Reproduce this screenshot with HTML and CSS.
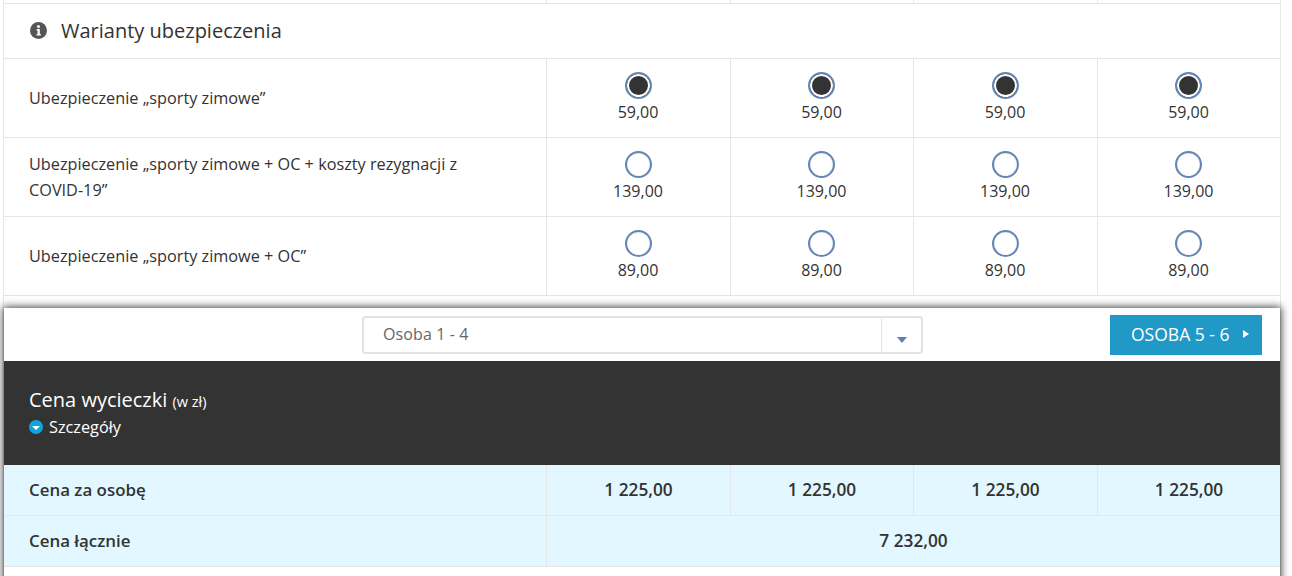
FILE: index.html
```html
<!DOCTYPE html>
<html lang="pl">
<head>
<meta charset="utf-8">
<title>Warianty ubezpieczenia</title>
<link rel="stylesheet" href="styles.css">
</head>
<body>
<div class="page">
  <div class="table">
    <div class="row stub"><div class="cell label"></div><div class="cell"></div><div class="cell"></div><div class="cell"></div><div class="cell last"></div></div>
    <div class="section-title">
      <svg class="info" width="17" height="17" viewBox="0 0 17 17"><circle cx="8.5" cy="8.5" r="8.5" fill="#555"/><circle cx="8.5" cy="4.6" r="1.5" fill="#fff"/><path d="M6.6 7h3.2v5h1v1.4H6.6V12h1V8.4h-1z" fill="#fff"/></svg>
      <span>Warianty ubezpieczenia</span>
    </div>
    <div class="row option">
      <div class="cell label">Ubezpieczenie „sporty zimowe”</div>
      <div class="cell choice"><span class="radio checked"></span><span>59,00</span></div>
      <div class="cell choice"><span class="radio checked"></span><span>59,00</span></div>
      <div class="cell choice"><span class="radio checked"></span><span>59,00</span></div>
      <div class="cell choice last"><span class="radio checked"></span><span>59,00</span></div>
    </div>
    <div class="row option">
      <div class="cell label">Ubezpieczenie „sporty zimowe + OC + koszty rezygnacji z COVID-19”</div>
      <div class="cell choice"><span class="radio"></span><span>139,00</span></div>
      <div class="cell choice"><span class="radio"></span><span>139,00</span></div>
      <div class="cell choice"><span class="radio"></span><span>139,00</span></div>
      <div class="cell choice last"><span class="radio"></span><span>139,00</span></div>
    </div>
    <div class="row option">
      <div class="cell label">Ubezpieczenie „sporty zimowe + OC”</div>
      <div class="cell choice"><span class="radio"></span><span>89,00</span></div>
      <div class="cell choice"><span class="radio"></span><span>89,00</span></div>
      <div class="cell choice"><span class="radio"></span><span>89,00</span></div>
      <div class="cell choice last"><span class="radio"></span><span>89,00</span></div>
    </div>
    <div class="panel">
      <div class="toolbar">
        <div class="select">
          <span class="select-value">Osoba 1 - 4</span>
          <span class="select-arrow"><span class="arrow-down"></span></span>
        </div>
        <div class="next"><span>OSOBA 5 - 6</span><span class="arrow-right"></span></div>
      </div>
      <div class="price-head">
        <div class="price-title">Cena wycieczki <small>(w zł)</small></div>
        <div class="details"><span class="details-icon"><span class="details-caret"></span></span>Szczegóły</div>
      </div>
      <div class="row total">
        <div class="cell label">Cena za osobę</div>
        <div class="cell">1 225,00</div>
        <div class="cell">1 225,00</div>
        <div class="cell">1 225,00</div>
        <div class="cell last">1 225,00</div>
      </div>
      <div class="row total">
        <div class="cell label">Cena łącznie</div>
        <div class="cell span">7 232,00</div>
      </div>
      <div class="panel-end"></div>
    </div>
  </div>
</div>
</body>
</html>
```
FILE: styles.css
```css
* { box-sizing: border-box; }
html, body { margin: 0; padding: 0; background: #fff; }
body { font-family: "Open Sans", "Liberation Sans", sans-serif; color: #333; }
.page { height: 576px; overflow: hidden; padding: 0 11px 0 3px; }
.table { border-left: 1px solid #e6e6e6; border-right: 1px solid #e6e6e6; }
.row { display: grid; grid-template-columns: 543px 184px 183px 184px 182px; border-bottom: 1px solid #e6e6e6; }
.cell { display: flex; align-items: center; justify-content: center; border-right: 1px solid #e6e6e6; }
.cell.last { border-right: 0; }
.cell.label { justify-content: flex-start; padding: 0 80px 0 25px; font-size: 16.25px; line-height: 26px; }
.stub { height: 4px; }
.section-title { display: flex; align-items: center; height: 55px; padding: 0 0 2px 26px; border-bottom: 1px solid #e6e6e6; font-size: 20px; }
.info { margin-right: 14px; flex: none; }
.option { height: 79px; }
.choice { flex-direction: column; justify-content: flex-start; padding: 13px 1px 0 0; font-size: 16px; line-height: 22px; }
.radio { display: block; width: 27px; height: 27px; border: 2px solid #6486b5; border-radius: 50%; background: #fff; margin-bottom: 2px; box-shadow: inset 0 0 1px #6486b5; }
.radio.checked { background: #333; box-shadow: inset 0 0 0 2px #fff; }
.panel { margin-top: 12px; box-shadow: 0 0 8px 1px rgba(0,0,0,.75); background: #fff; }
.toolbar { display: flex; align-items: center; height: 53px; padding: 0 18px 0 358px; }
.select { display: flex; width: 561px; height: 38px; border: 2px solid #e2e2e2; border-radius: 4px; font-size: 16px; color: #666; }
.select-value { flex: 1; padding-left: 19px; line-height: 32px; letter-spacing: .1px; }
.select-arrow { display: flex; justify-content: center; width: 40px; padding-top: 19px; border-left: 1px solid #e2e2e2; }
.arrow-down { width: 0; height: 0; border-left: 5px solid transparent; border-right: 5px solid transparent; border-top: 6px solid #5b80b2; }
.next { display: flex; align-items: center; width: 152px; height: 40px; margin-left: auto; padding: 0 0 2px 21px; background: #2099c7; color: #fff; font-size: 17.5px; }
.arrow-right { width: 0; height: 0; margin-left: 14px; border-top: 4.5px solid transparent; border-bottom: 4.5px solid transparent; border-left: 6px solid #fff; }
.price-head { height: 104px; background: #333; color: #fff; padding: 25px 25px 0; }
.price-title { font-size: 20px; line-height: 27px; }
.price-title small { font-size: 14.5px; }
.details { display: flex; align-items: center; font-size: 16.25px; line-height: 24px; margin-top: 0; }
.details-icon { display: flex; align-items: center; justify-content: center; width: 14px; height: 14px; margin-right: 6px; border-radius: 50%; background: #0ea5dc; }
.details-caret { width: 0; height: 0; margin-top: 2px; border-left: 4px solid transparent; border-right: 4px solid transparent; border-top: 4px solid #fff; }
.total { height: 51px; background: #e2f7ff; font-weight: 600; font-size: 17.25px; }
.total .cell { padding-bottom: 2px; }
.total .cell.label { font-size: 16.9px; line-height: 25px; padding-bottom: 2px; }
.span { grid-column: 2 / 6; border-right: 0; }
.panel-end { height: 60px; }
```
